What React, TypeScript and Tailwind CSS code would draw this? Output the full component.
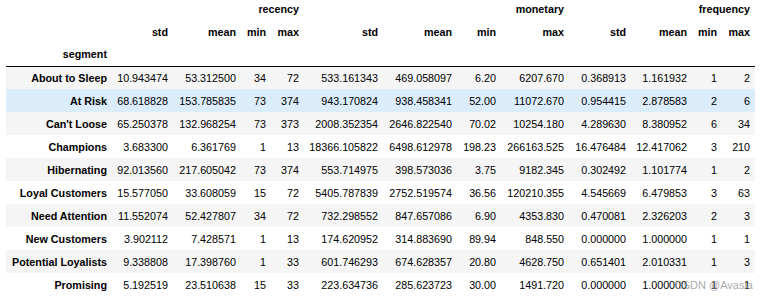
import React from 'react';

const groups = ['recency', 'monetary', 'frequency'];
const stats = ['std', 'mean', 'min', 'max'];

// column widths: index, then std / mean / min / max per group
const colWidths = [
  'w-[106px]',
  'w-[61px]', 'w-[68px]', 'w-[30px]', 'w-[33px]',
  'w-[79px]', 'w-[74px]', 'w-[44px]', 'w-[68px]',
  'w-[62px]', 'w-[61px]', 'w-[30px]', 'w-[33px]',
];

const rows: [string, string[]][] = [
  ['About to Sleep', ['10.943474', '53.312500', '34', '72', '533.161343', '469.058097', '6.20', '6207.670', '0.368913', '1.161932', '1', '2']],
  ['At Risk', ['68.618828', '153.785835', '73', '374', '943.170824', '938.458341', '52.00', '11072.670', '0.954415', '2.878583', '2', '6']],
  ["Can't Loose", ['65.250378', '132.968254', '73', '373', '2008.352354', '2646.822540', '70.02', '10254.180', '4.289630', '8.380952', '6', '34']],
  ['Champions', ['3.683300', '6.361769', '1', '13', '18366.105822', '6498.612978', '198.23', '266163.525', '16.476484', '12.417062', '3', '210']],
  ['Hibernating', ['92.013560', '217.605042', '73', '374', '553.714975', '398.573036', '3.75', '9182.345', '0.302492', '1.101774', '1', '2']],
  ['Loyal Customers', ['15.577050', '33.608059', '15', '72', '5405.787839', '2752.519574', '36.56', '120210.355', '4.545669', '6.479853', '3', '63']],
  ['Need Attention', ['11.552074', '52.427807', '34', '72', '732.298552', '847.657086', '6.90', '4353.830', '0.470081', '2.326203', '2', '3']],
  ['New Customers', ['3.902112', '7.428571', '1', '13', '174.620952', '314.883690', '89.94', '848.550', '0.000000', '1.000000', '1', '1']],
  ['Potential Loyalists', ['9.338808', '17.398760', '1', '33', '601.746293', '674.628357', '20.80', '4628.750', '0.651401', '2.010331', '1', '3']],
  ['Promising', ['5.192519', '23.510638', '15', '33', '223.634736', '285.623723', '30.00', '1491.720', '0.000000', '1.000000', '1', '1']],
];

export default function App() {
  return (
    <div className="relative h-[300px] w-[768px] overflow-hidden bg-white font-['Liberation_Sans',Arial,sans-serif] text-black">
      <div className="pl-[6px]">
        <table className="-mt-[3px] w-[749px] table-fixed border-collapse text-[10.75px] leading-[12px]">
          <colgroup>
            {colWidths.map((w, i) => (
              <col key={i} className={w} />
            ))}
          </colgroup>
          <thead>
            <tr className="h-[23px]">
              <th className="p-0" />
              {groups.map((g) => (
                <th key={g} colSpan={4} className="px-[5px] py-0 text-right font-bold">
                  {g}
                </th>
              ))}
            </tr>
            <tr className="h-[23px]">
              <th className="p-0" />
              {groups.map((g) =>
                stats.map((s) => (
                  <th key={g + s} className="px-[5px] py-0 text-right font-bold">
                    {s}
                  </th>
                ))
              )}
            </tr>
            <tr className="h-[23px] border-b border-black">
              <th className="px-[5px] py-0 text-right font-bold">segment</th>
              {Array.from({ length: 12 }).map((_, i) => (
                <th key={i} className="p-0" />
              ))}
            </tr>
          </thead>
          <tbody>
            {rows.map(([name, vals], i) => (
              <tr
                key={name}
                className={
                  'h-[23px] ' +
                  (name === 'At Risk' ? 'bg-[#dbecfb]' : i % 2 === 0 ? 'bg-[#f5f5f5]' : 'bg-white')
                }
              >
                <th className="whitespace-nowrap px-[5px] py-0 text-right font-bold">{name}</th>
                {vals.map((v, j) => (
                  <td key={j} className="whitespace-nowrap px-[5px] py-0 text-right">
                    {v}
                  </td>
                ))}
              </tr>
            ))}
          </tbody>
        </table>
      </div>
      {/* watermark */}
      <div className="absolute right-[15px] top-[279px] text-[11px] leading-[13px] text-[#999999]/85">
        CSDN @Avasla
      </div>
    </div>
  );
}
